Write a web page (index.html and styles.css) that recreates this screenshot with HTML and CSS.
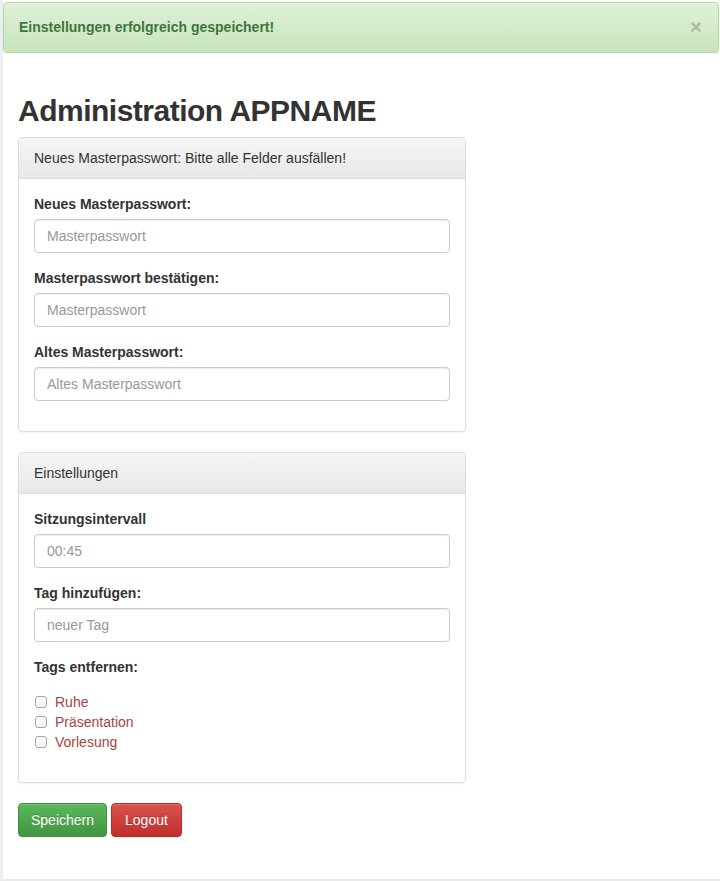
FILE: index.html
```html
<!DOCTYPE html>
<html lang="de">
<head>
<meta charset="utf-8">
<title>Administration APPNAME</title>
<link rel="stylesheet" href="styles.css">
</head>
<body>
<div class="page">
  <div class="alert">
    <span class="alert-text">Einstellungen erfolgreich gespeichert!</span>
    <span class="close">&times;</span>
  </div>
  <div class="container">
    <h1 class="title">Administration APPNAME</h1>
    <div class="panel">
      <div class="panel-heading">Neues Masterpasswort: Bitte alle Felder ausfällen!</div>
      <div class="panel-body">
        <div class="form-group">
          <label class="form-label">Neues Masterpasswort:</label>
          <input class="form-control" type="password" placeholder="Masterpasswort">
        </div>
        <div class="form-group">
          <label class="form-label">Masterpasswort bestätigen:</label>
          <input class="form-control" type="password" placeholder="Masterpasswort">
        </div>
        <div class="form-group">
          <label class="form-label">Altes Masterpasswort:</label>
          <input class="form-control" type="password" placeholder="Altes Masterpasswort">
        </div>
      </div>
    </div>
    <div class="panel">
      <div class="panel-heading">Einstellungen</div>
      <div class="panel-body">
        <div class="form-group">
          <label class="form-label">Sitzungsintervall</label>
          <input class="form-control" type="text" placeholder="00:45">
        </div>
        <div class="form-group">
          <label class="form-label">Tag hinzufügen:</label>
          <input class="form-control" type="text" placeholder="neuer Tag">
        </div>
        <div class="form-group">
          <label class="form-label">Tags entfernen:</label>
          <div class="checks">
            <label class="check"><input type="checkbox" class="box"><span>Ruhe</span></label>
            <label class="check"><input type="checkbox" class="box"><span>Präsentation</span></label>
            <label class="check"><input type="checkbox" class="box"><span>Vorlesung</span></label>
          </div>
        </div>
      </div>
    </div>
    <div class="actions">
      <button class="btn btn-success">Speichern</button>
      <button class="btn btn-danger">Logout</button>
    </div>
  </div>
</div>
</body>
</html>
```
FILE: styles.css
```css
html, body {
  margin: 0;
  padding: 0;
  background: #fff;
}
body {
  font-family: "Liberation Sans", Arial, sans-serif;
  font-size: 14px;
  line-height: 20px;
  color: #333;
}
.page {
  box-sizing: border-box;
  min-height: 881px;
  border-left: 3px solid #eceef3;
  border-bottom: 2px solid #e9e9e9;
  padding-top: 2px;
}
.alert {
  display: flex;
  justify-content: space-between;
  align-items: center;
  margin-right: 1px;
  padding: 14px 15px 15px;
  border: 1px solid #b2dba1;
  border-radius: 4px;
  background: linear-gradient(to bottom, #dff0d8 0%, #c8e5bc 100%);
  box-shadow: inset 0 1px 0 rgba(255,255,255,.25), 0 1px 2px rgba(0,0,0,.05);
  color: #3c763d;
  font-weight: bold;
  text-shadow: 0 1px 0 rgba(255,255,255,.2);
}
.close {
  font-size: 21px;
  font-weight: bold;
  line-height: 20px;
  color: #000;
  opacity: .2;
  text-shadow: 0 1px 0 #fff;
  margin-right: 1px;
}
.container {
  padding: 0 15px;
  width: 448px;
}
.title {
  margin: 41px 0 10px;
  font-size: 30px;
  line-height: 33px;
  font-weight: bold;
  letter-spacing: -0.5px;
  color: #333;
}
.panel {
  border: 1px solid #ddd;
  border-radius: 4px;
  box-shadow: 0 1px 2px rgba(0,0,0,.05);
  margin-bottom: 20px;
  background: #fff;
}
.panel-heading {
  padding: 10px 15px;
  border-bottom: 1px solid #ddd;
  border-radius: 3px 3px 0 0;
  background: linear-gradient(to bottom, #f5f5f5 0%, #e8e8e8 100%);
}
.panel-body {
  padding: 15px;
}
.form-group {
  margin-bottom: 15px;
}
.form-label {
  display: block;
  font-weight: bold;
  margin-bottom: 5px;
}
.form-control {
  display: block;
  box-sizing: border-box;
  width: 100%;
  height: 34px;
  padding: 6px 12px;
  font-family: inherit;
  font-size: 14px;
  line-height: 20px;
  color: #555;
  border: 1px solid #ccc;
  border-radius: 4px;
  box-shadow: inset 0 1px 1px rgba(0,0,0,.075);
  background: #fff;
  outline: none;
}
.form-control::placeholder {
  color: #999;
}
.checks {
  margin-top: 15px;
}
.check {
  display: flex;
  align-items: center;
  height: 20px;
  color: #a94442;
}
.box {
  appearance: none;
  -webkit-appearance: none;
  box-sizing: border-box;
  width: 12px;
  height: 12px;
  margin: 0 8px 0 1px;
  border: 1px solid #a6a6a6;
  border-radius: 3px;
  background: linear-gradient(to bottom, #fff, #f3f3f3);
}
.actions {
  display: flex;
  gap: 4px;
}
.btn {
  height: 34px;
  padding: 6px 12px;
  font-family: inherit;
  font-size: 14px;
  line-height: 20px;
  color: #fff;
  border-radius: 4px;
  border: 1px solid transparent;
  text-shadow: 0 -1px 0 rgba(0,0,0,.2);
  box-shadow: inset 0 1px 0 rgba(255,255,255,.15), 0 1px 1px rgba(0,0,0,.075);
  cursor: pointer;
}
.btn-success {
  background: linear-gradient(to bottom, #5cb85c 0%, #419641 100%);
  border-color: #3e8f3e;
}
.btn-danger {
  background: linear-gradient(to bottom, #d9534f 0%, #c12e2a 100%);
  border-color: #b92c28;
  padding: 6px 13px;
}
```
